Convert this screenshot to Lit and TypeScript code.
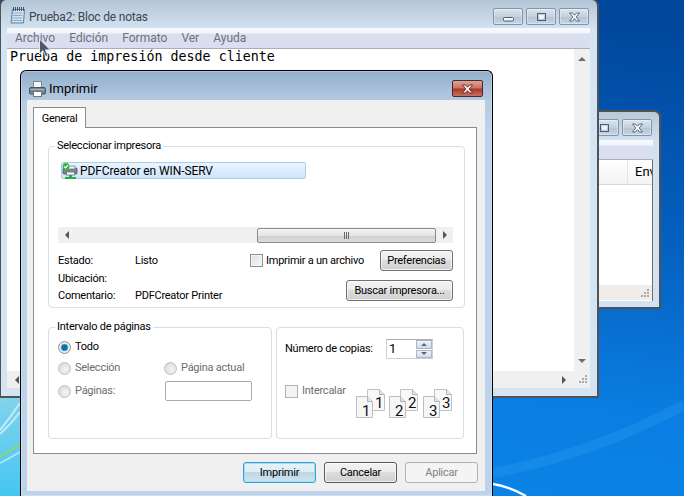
import {LitElement, css, html, svg} from 'lit';
import {customElement} from 'lit/decorators.js';

const MENUS = ['Archivo', 'Edición', 'Formato', 'Ver', 'Ayuda'];

const minGlyph = svg`<rect x="1.5" y="5.5" width="10" height="3.5" rx="1" fill="#f4f7fa" stroke="#4d5c70"/>`;
const maxGlyph = svg`<rect x="2.5" y="1.5" width="8" height="7" fill="none" stroke="#4d5c70"/><rect x="4.5" y="3.5" width="4" height="3" fill="#f4f7fa" stroke="#f4f7fa" stroke-width=".6"/>`;
const xGlyph = (stroke = '#4d5c70') => svg`<path d="M1.5 1h3l2 2.2L8.5 1h3L8.2 5l3.3 4h-3l-2-2.3L4.5 9h-3l3.300-4z" fill="#f4f7fa" stroke=${stroke} stroke-width=".9"/>`;

const glyph = (content: unknown) => html`<svg class="glyph" width="13" height="10" viewBox="0 0 13 10">${content}</svg>`;

const grip = html`<svg width="16" height="16" viewBox="0 0 16 16">
  <g fill="#a9a9a9"><rect x="11" y="4" width="2" height="2"/><rect x="8" y="7" width="2" height="2"/><rect x="11" y="7" width="2" height="2"/><rect x="5" y="10" width="2" height="2"/><rect x="8" y="10" width="2" height="2"/><rect x="11" y="10" width="2" height="2"/></g>
</svg>`;

const pageSet = (dx: number, n: number) => svg`
  <g transform="translate(${dx} 0)">
    <path d="M11.500 .5h12l5 5v16h-17z" fill="#f8f8f8" stroke="#c2c2c2"/>
    <path d="M23.500 .5v5h5" fill="#e4e4e4" stroke="#b5b5b5"/>
    <path d="M.5 7.500h11l5 5v16H.5z" fill="#f6f6f6" stroke="#bdbdbd"/>
    <path d="M11.500 7.500v5h5" fill="#e4e4e4" stroke="#b5b5b5"/>
    <text x="19" y="19" class="num">${n}</text>
    <text x="6" y="27" class="num">${n}</text>
  </g>`;

@customElement('app-root')
export class AppRoot extends LitElement {
  static styles = css`
    :host {
      display: block;
      position: relative;
      width: 684px;
      height: 496px;
      overflow: hidden;
      font: 11px/14px Roboto, sans-serif;
      letter-spacing: -0.25px;
      color: #000;
    }
    .wallpaper { position: absolute; inset: 0; }
    .win { position: absolute; box-sizing: border-box; display: flex; flex-direction: column; }

    /* window chrome */
    .caps { display: flex; gap: 3px; }
    .cap {
      box-sizing: border-box;
      width: 30px;
      height: 17px;
      display: flex;
      align-items: center;
      justify-content: center;
      border: 1px solid #8493a8;
      border-radius: 2px;
      background: linear-gradient(#dbe5ee, #c3d1de 50%, #b5c5d5 52%, #c6d5e3);
      box-shadow: inset 0 0 0 1px rgba(255, 255, 255, .35);
    }
    .menu {
      box-sizing: border-box;
      height: 21px;
      display: flex;
      align-items: center;
      padding-left: 8px;
      gap: 14px;
      color: #6d7079;
      font-size: 12px;
      letter-spacing: 0;
      border-bottom: 1px solid #a9acb9;
      background: linear-gradient(#f7fafd 0, #f1f5fa 5px, #d9dff0 6px, #d9dff0);
    }

    /* back window */
    .back {
      left: 560px;
      top: 110px;
      width: 101px;
      height: 199px;
      border: 2px solid #4f5257;
      border-left: 0;
      border-radius: 0 7px 0 0;
      background: linear-gradient(#b9c9d8, #d3e2f1 30px);
      padding: 0 6px 6px 0;
    }
    .back .caps { justify-content: flex-end; padding: 7px 1px 0 0; height: 22px; box-sizing: border-box; }
    .back .menu { margin-top: 6px; height: 20px; flex: none; }
    .back-list { flex: 1; background: #fff; border-right: 1px solid #6c7075; display: flex; flex-direction: column; }
    .back-head {
      height: 24px;
      display: flex;
      align-items: center;
      justify-content: flex-end;
      background: linear-gradient(#fff, #f1f3f5);
      border-bottom: 1px solid #d9d9d9;
      overflow: hidden;
    }
    .back-head span {
      box-sizing: border-box;
      width: 25px;
      padding-left: 7px;
      line-height: 24px;
      border-left: 1px solid #e3e5e7;
      white-space: nowrap;
      overflow: hidden;
      font-size: 13px;
      letter-spacing: 0;
    }
    .back-fill { flex: 1; }
    .back-status { height: 15px; background: #f0ecea; display: flex; justify-content: flex-end; border-bottom: 1px solid #fff; }

    /* notepad */
    .notepad {
      left: -1px;
      top: -1px;
      width: 600px;
      height: 399px;
      border: 2px solid #4f5257;
      border-top-width: 1px;
      border-radius: 7px 7px 0 0;
      background: linear-gradient(#b4c5d5, #d5e4f3 30px);
      padding: 0 7px 8px 6px;
    }
    .np-title {
      box-sizing: border-box;
      height: 28px;
      flex: none;
      display: flex;
      align-items: center;
      gap: 3px;
      color: #3c4650;
      font-size: 12px;
      letter-spacing: -0.2px;
      padding: 5px 1px 0 3px;
    }
    .np-title svg.note { margin-top: -3px; }
    .np-title .caps { margin-left: auto; }
    .np-body { flex: 1; display: grid; grid-template-columns: 1fr 16px; grid-template-rows: 1fr 17px; background: #fff; min-height: 0; }
    .np-text {
      font: 13.33px/15px "DejaVu Sans Mono", monospace;
      letter-spacing: 0;
      padding: 0 0 0 3px;
    }
    .vbar {
      background: #f0f0f0;
      display: flex;
      flex-direction: column;
      justify-content: space-between;
      align-items: center;
      padding: 8px 0;
    }
    .hbar { background: #f0f0f0; display: flex; align-items: center; justify-content: space-between; padding: 0 8px; }
    .corner { background: #f0f0f0; }
    .arrow { width: 0; height: 0; border-style: solid; border-color: transparent; }
    .a-up { border-width: 0 4px 4px; border-bottom-color: #6e6e6e; }
    .a-down { border-width: 4px 4px 0; border-top-color: #6e6e6e; }
    .a-left { border-width: 4px 4px 4px 0; border-right-color: #555; }
    .a-right { border-width: 4px 0 4px 4px; border-left-color: #555; }

    /* print dialog */
    .dialog {
      left: 20px;
      top: 70px;
      width: 473px;
      height: 426px;
      border: 1px solid #000;
      border-bottom: 0;
      border-radius: 6px 6px 0 0;
      background: linear-gradient(#94aecb, #b4cbe2 30px, #bcd3eb 60px);
      padding: 0 7px 5px 6px;
      box-shadow: inset 0 0 0 1px rgba(255, 255, 255, .25);
    }
    .dlg-title {
      box-sizing: border-box;
      height: 29px;
      flex: none;
      display: flex;
      align-items: center;
      gap: 3px;
      padding: 6px 0 0 2px;
      font-size: 13px;
      letter-spacing: 0;
    }
    .cap-close {
      box-sizing: border-box;
      margin: 0 2px 0 auto;
      width: 31px;
      height: 17px;
      display: flex;
      align-items: center;
      justify-content: center;
      border: 1px solid #4a2a2a;
      border-radius: 2px;
      background: linear-gradient(#e0a498, #cf7160 45%, #a83a26 55%, #c9705f);
    }
    .client {
      flex: 1;
      background: #f0f0f0;
      padding: 7px 8px 0 6px;
      display: flex;
      flex-direction: column;
    }
    .tab {
      box-sizing: border-box;
      width: 53px;
      height: 21px;
      position: relative;
      z-index: 1;
      border: 1px solid #898c95;
      border-bottom: 0;
      background: #fff;
      line-height: 22px;
      text-align: center;
    }
    .panel {
      box-sizing: border-box;
      height: 327px;
      margin-top: -1px;
      border: 1px solid #898c95;
      background: #fff;
      padding: 11px 11px 0 14px;
    }
    fieldset {
      box-sizing: border-box;
      margin: 0;
      min-width: 0;
      border: 1px solid #d5dfe5;
      border-radius: 4px;
    }
    legend { padding: 0 2px; margin-left: -3px; line-height: 14px; }
    .sel { width: 417px; height: 169px; padding: 0 11px 0 9px; display: flex; flex-direction: column; }
    .list { height: 90px; flex: none; display: flex; flex-direction: column; justify-content: space-between; }
    .item {
      box-sizing: border-box;
      margin: 9px 0 0 3px;
      width: 245px;
      height: 17px;
      display: flex;
      align-items: center;
      gap: 1px;
      border: 1px solid #a9cdf0;
      border-radius: 2px;
      background: linear-gradient(#eaf4fe, #cfe4fb);
      font-size: 12px;
      letter-spacing: -0.1px;
    }
    .item svg { margin-left: 0; flex: none; }
    .hscroll {
      height: 16px;
      background: #f0f0f0;
      display: grid;
      grid-template-columns: 199px 179px 1fr;
      align-items: center;
    }
    .hscroll .a-left { margin-left: 7px; }
    .hscroll .a-right { margin-left: 7px; }
    .thumb {
      box-sizing: border-box;
      height: 15px;
      border: 1px solid #8b8b8b;
      border-radius: 2px;
      background: linear-gradient(#f4f4f4, #e4e4e4 50%, #cfcfcf 52%, #dcdcdc);
      display: flex;
      align-items: center;
      justify-content: center;
      gap: 1px;
    }
    .thumb i { width: 1px; height: 7px; background: #6a6a6a; }
    .info { display: flex; justify-content: space-between; }
    .facts {
      display: grid;
      grid-template-columns: 77px auto;
      grid-auto-rows: 17.5px;
      line-height: 17.5px;
      padding-top: 9px;
      align-self: flex-start;
    }
    .actions { width: 203px; padding-top: 7px; display: flex; flex-direction: column; align-items: flex-end; gap: 9px; }
    .to-file { width: 100%; display: flex; align-items: center; justify-content: space-between; }
    .check-label { display: flex; align-items: center; gap: 3px; }
    .check {
      box-sizing: border-box;
      width: 13px;
      height: 13px;
      flex: none;
      border: 1px solid #8e8f8f;
      background: linear-gradient(135deg, #e0e0e0, #f7f7f7);
      box-shadow: inset 0 0 0 1px #f4f4f4;
    }
    .check.off { border-color: #b1b1b1; background: #f4f4f4; }
    button {
      box-sizing: border-box;
      height: 21px;
      padding: 0;
      font: inherit;
      letter-spacing: inherit;
      color: inherit;
      border: 1px solid #707070;
      border-radius: 3px;
      background: linear-gradient(#f3f3f3, #ebebeb 48%, #dddddd 50%, #cfcfcf);
      box-shadow: inset 0 0 0 1px rgba(255, 255, 255, .7);
    }
    .w73 { width: 73px; }
    .w107 { width: 107px; }
    .lower { display: flex; gap: 4px; margin-top: 12px; }
    .range { width: 224px; height: 119px; padding: 3px 0 0 9px; }
    .range-grid {
      display: grid;
      grid-template-columns: 106px 1fr;
      grid-template-rows: 20px 20px 24px;
      row-gap: 1px;
      align-items: center;
    }
    .radio-label { display: flex; align-items: center; gap: 4px; }
    .off-text { color: #6d6d6d; }
    .radio {
      box-sizing: border-box;
      width: 13px;
      height: 13px;
      flex: none;
      border-radius: 50%;
      border: 1px solid #8e8f8f;
      background: radial-gradient(circle at 50% 50%, #0b6fb0 0 2.500px, #5fb2e0 3.500px, #e6e6e6 4px, #f5f5f5);
    }
    .radio.off { border-color: #c0c0c0; background: radial-gradient(circle at 60% 60%, #f4f4f4, #d4d4d4); }
    .text-input { box-sizing: border-box; width: 87px; height: 20px; margin-left: 1px; border: 1px solid #ababab; border-radius: 2px; background: #fff; }
    .copies { width: 188px; height: 112px; margin-top: 7px; padding: 11px 9px 0 8px; }
    .copy-row { display: flex; align-items: center; }
    .copy-row > span { width: 101px; flex: none; }
    .spin {
      box-sizing: border-box;
      width: 47px;
      height: 20px;
      display: flex;
      align-items: center;
      padding-left: 2px;
      border: 1px solid #c8d2da;
      border-top-color: #abadb3;
      font-size: 13px;
    }
    .spin b { font-weight: 400; flex: 1; }
    .spin-btns { width: 16px; height: 18px; display: flex; flex-direction: column; gap: 1px; }
    .spin-btns div {
      flex: 1;
      display: flex;
      align-items: center;
      justify-content: center;
      background: linear-gradient(#eef2f7, #d4dce6);
      border: 1px solid #adb6c2;
      box-sizing: border-box;
    }
    .spin-btns .a-up { border-width: 0 3px 3px; border-bottom-color: #4a6a96; }
    .spin-btns .a-down { border-width: 3px 3px 0; border-top-color: #4a6a96; }
    .collate { display: flex; margin-top: 25px; align-items: flex-start; }
    .collate .check-label { gap: 4px; }
    .collate svg { margin: 5px 0 0 auto; }
    .num { font: 15px Roboto, sans-serif; letter-spacing: 0; fill: #111; }
    .footer { display: flex; justify-content: flex-end; gap: 8px; margin: 8px -1px 0 0; }
    .default {
      border-color: #3c9dd0;
      background: linear-gradient(#e6f3fa, #dcedf6 48%, #bcd7e5 50%, #cfe4ef);
      box-shadow: inset 0 0 0 1px #9fe0f8;
    }
    .focus { border-color: #5a5a5a; }
    .disabled { border-color: #adb2b5; background: #f4f4f4; color: #838383; box-shadow: none; }
    .cursor { position: absolute; left: 38px; top: 38px; }
  `;

  render() {
    return html`
      <svg class="wallpaper" width="684" height="496" viewBox="0 0 684 496">
        <defs>
          <linearGradient id="sky" x1="0.8" y1="0" x2="0.65" y2="1">
            <stop offset="0" stop-color="#00469a"/>
            <stop offset=".45" stop-color="#0560bf"/>
            <stop offset=".8" stop-color="#0a7ee2"/>
            <stop offset="1" stop-color="#0a84e6"/>
          </linearGradient>
          <linearGradient id="aqua" x1="0" y1="0" x2="0" y2="1">
            <stop offset="0" stop-color="#86d4ea"/>
            <stop offset="1" stop-color="#45c6f3"/>
          </linearGradient>
        </defs>
        <rect width="684" height="496" fill="url(#sky)"/>
        <rect y="390" width="24" height="106" fill="url(#aqua)"/>
        <path d="M0 430Q10 418 20 403M0 434Q10 425 20 412" stroke="#e4f6fb" stroke-width="2" fill="none" opacity=".7"/>
        <path d="M0 457Q10 451 20 444" stroke="#8fd66a" stroke-width="2" fill="none"/>
        <path d="M0 463Q10 458 20 452" stroke="#d8f4fa" stroke-width="1.500" fill="none" opacity=".7"/>
        <path d="M493 473Q590 455 684 405" stroke="#2a9cf0" stroke-width="10" fill="none" opacity=".35"/>
        <path d="M493 484Q508 486 526 496" stroke="#fff" stroke-width="2.500" fill="none"/>
      </svg>

      <div class="win back">
        <div class="caps">
          <div class="cap">${glyph(maxGlyph)}</div>
          <div class="cap">${glyph(xGlyph())}</div>
        </div>
        <div class="menu"></div>
        <div class="back-list">
          <div class="back-head"><span>Env</span></div>
          <div class="back-fill"></div>
          <div class="back-status">${grip}</div>
        </div>
      </div>

      <div class="win notepad">
        <div class="np-title">
          <svg class="note" width="16" height="17" viewBox="0 0 16 17">
            <path d="M2.500 2.500h12l-1 13.500h-12.500z" fill="#cfe2f2" stroke="#5f7f9c"/>
            <path d="M3 6h9.500M2.800 8.500h9.500M2.500 11h9.500M2.300 13.500h9.500" stroke="#8fa8c0"/>
            <path d="M3.500 0v4M5.500 0v4M7.500 0v4M9.500 0v4M11.500 0v4M13.500 0v4" stroke="#44566b"/>
          </svg>
          <span>Prueba2: Bloc de notas</span>
          <div class="caps">
            <div class="cap">${glyph(minGlyph)}</div>
            <div class="cap">${glyph(maxGlyph)}</div>
            <div class="cap">${glyph(xGlyph())}</div>
          </div>
        </div>
        <div class="menu">${MENUS.map(m => html`<span>${m}</span>`)}</div>
        <div class="np-body">
          <div class="np-text">Prueba de impresión desde cliente</div>
          <div class="vbar"><div class="arrow a-up"></div><div class="arrow a-down"></div></div>
          <div class="hbar"><div class="arrow a-left"></div><div class="arrow a-right"></div></div>
          <div class="corner">${grip}</div>
        </div>
      </div>

      <div class="win dialog">
        <div class="dlg-title">
          <svg width="17" height="16" viewBox="0 0 17 16">
            <rect x="4.500" y=".5" width="8" height="6" fill="#f4f6f8" stroke="#7c8794"/>
            <path d="M2 6.500h13q1.500 0 1.500 1.500v4q0 1-1.500 1H2q-1.500 0-1.500-1V8Q.5 6.500 2 6.500z" fill="#77838f" stroke="#4a5560"/>
            <path d="M1.500 8.500h14" stroke="#aab4bd"/>
            <rect x="4.500" y="10.500" width="8" height="5" fill="#fff" stroke="#6d7884"/>
            <rect x="13" y="8" width="2" height="1.500" fill="#6fd06f"/>
          </svg>
          <span>Imprimir</span>
          <div class="cap-close">${glyph(xGlyph('#5a2a22'))}</div>
        </div>
        <div class="client">
          <div class="tab">General</div>
          <div class="panel">
            <fieldset class="sel">
              <legend>Seleccionar impresora</legend>
              <div class="list">
                <div class="item">
                  <svg width="17" height="16" viewBox="0 0 17 16">
                    <rect x="1" y="5" width="14" height="6" rx="1" fill="#77838f" stroke="#48525c" stroke-width=".8"/>
                    <rect x="5" y="3" width="8" height="3" fill="#f0f2f4" stroke="#7c8794" stroke-width=".8"/>
                    <rect x="4.500" y="9" width="8" height="3" fill="#fff" stroke="#6d7884" stroke-width=".8"/>
                    <rect x="7" y="12" width="3" height="2" fill="#1fae4a"/>
                    <rect x="3" y="14" width="11" height="2" fill="#1fae4a"/>
                    <circle cx="4" cy="3.500" r="3.400" fill="#2eb83a"/>
                    <path d="M2.200 3.500l1.300 1.400 2.400-2.700" stroke="#fff" stroke-width="1.200" fill="none"/>
                  </svg>
                  <span>PDFCreator en WIN-SERV</span>
                </div>
                <div class="hscroll">
                  <div class="arrow a-left"></div>
                  <div class="thumb"><i></i><i></i><i></i></div>
                  <div class="arrow a-right"></div>
                </div>
              </div>
              <div class="info">
                <div class="facts">
                  <span>Estado:</span><span>Listo</span>
                  <span>Ubicación:</span><span></span>
                  <span>Comentario:</span><span>PDFCreator Printer</span>
                </div>
                <div class="actions">
                  <div class="to-file">
                    <label class="check-label"><span class="check"></span>Imprimir a un archivo</label>
                    <button class="w73">Preferencias</button>
                  </div>
                  <button class="w107">Buscar impresora...</button>
                </div>
              </div>
            </fieldset>
            <div class="lower">
              <fieldset class="range">
                <legend>Intervalo de páginas</legend>
                <div class="range-grid">
                  <label class="radio-label"><span class="radio"></span>Todo</label>
                  <span></span>
                  <label class="radio-label off-text"><span class="radio off"></span>Selección</label>
                  <label class="radio-label off-text"><span class="radio off"></span>Página actual</label>
                  <label class="radio-label off-text"><span class="radio off"></span>Páginas:</label>
                  <div class="text-input"></div>
                </div>
              </fieldset>
              <fieldset class="copies">
                <div class="copy-row">
                  <span>Número de copias:</span>
                  <div class="spin">
                    <b>1</b>
                    <div class="spin-btns">
                      <div><i class="arrow a-up"></i></div>
                      <div><i class="arrow a-down"></i></div>
                    </div>
                  </div>
                </div>
                <div class="collate">
                  <label class="check-label off-text"><span class="check off"></span>Intercalar</label>
                  <svg width="98" height="30" viewBox="0 0 98 30">
                    ${pageSet(0, 1)}${pageSet(33, 2)}${pageSet(67, 3)}
                  </svg>
                </div>
              </fieldset>
            </div>
          </div>
          <div class="footer">
            <button class="w73 default">Imprimir</button>
            <button class="w73 focus">Cancelar</button>
            <button class="w73 disabled">Aplicar</button>
          </div>
        </div>
      </div>

      <svg class="cursor" width="14" height="20" viewBox="0 0 14 20">
        <path d="M1.500 1v15l3.500-3.300 2.600 5.800 2.400-1-2.600-5.600h4.900z" fill="#4f5a68" stroke="#e8eef4" stroke-width=".9"/>
      </svg>
    `;
  }
}
